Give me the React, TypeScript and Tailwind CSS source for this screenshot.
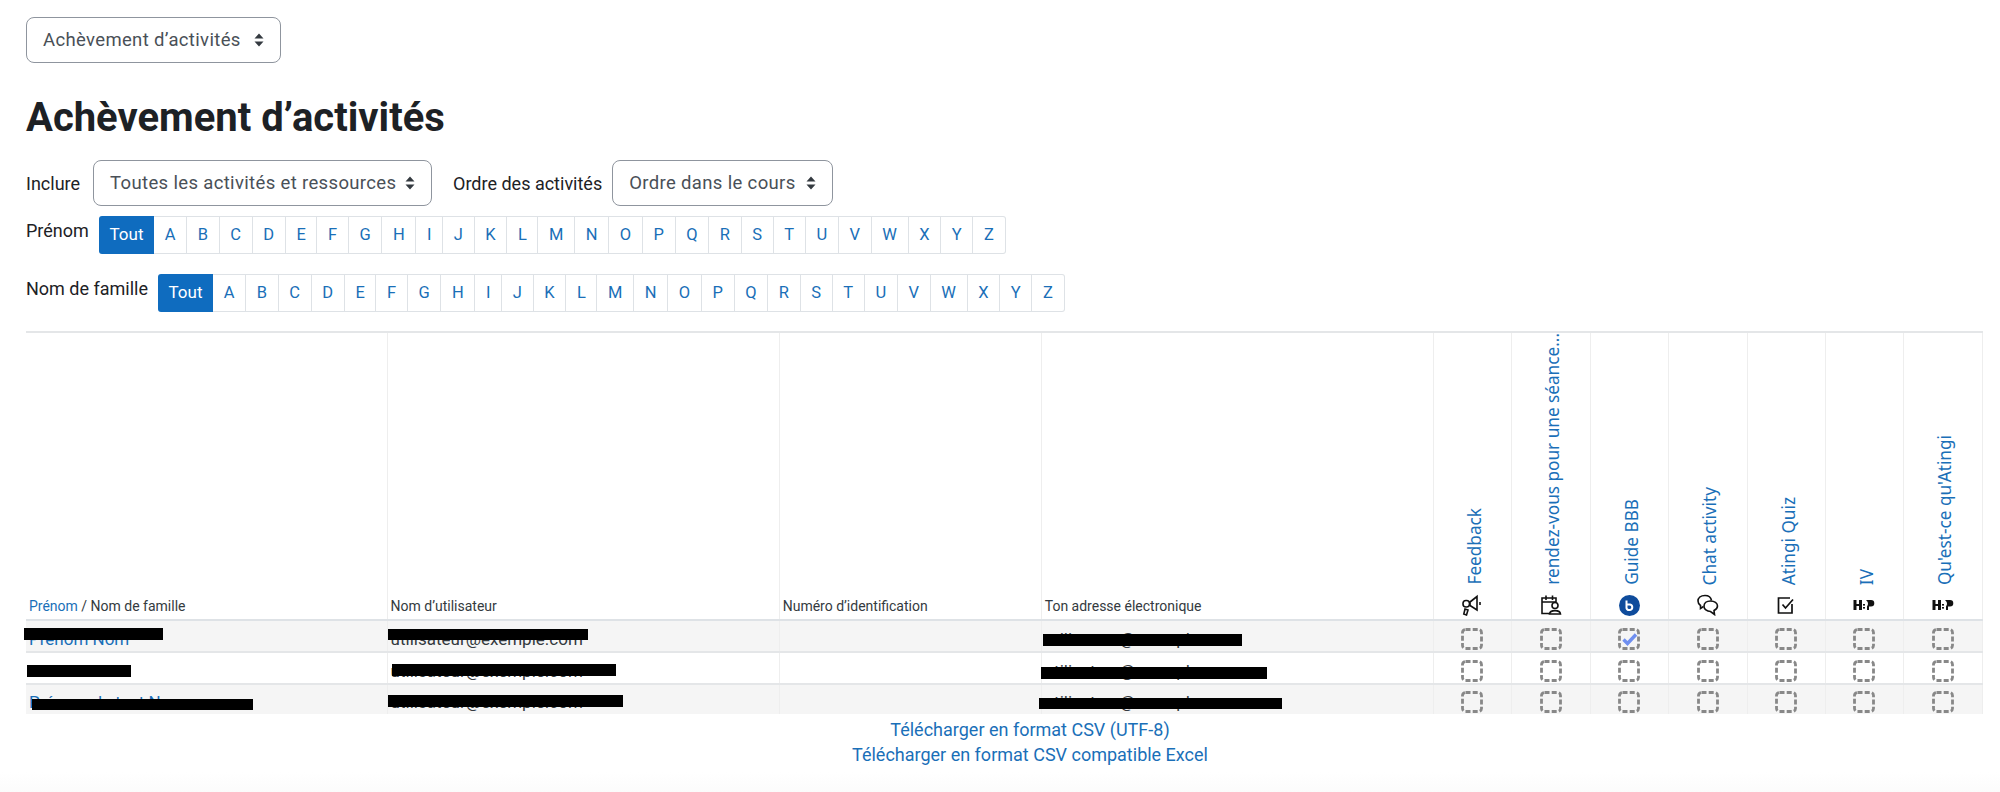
import type { ReactNode } from "react";

const letters = "ABCDEFGHIJKLMNOPQRSTUVWXYZ".split("");

const bodyFont = "font-['Roboto',_sans-serif]";

function Arrows() {
  return (
    <svg width="10" height="14" viewBox="0 0 10 14" className="shrink-0">
      <path d="M5 0.5 L9.5 5.5 H0.5 Z M5 13.5 L0.5 8.5 H9.5 Z" fill="#343a40" />
    </svg>
  );
}

function FakeSelect({ label, className }: { label: string; className: string }) {
  return (
    <div
      className={`flex h-[46px] items-center justify-between rounded-lg border border-[#8f959e] bg-white pl-[16px] pr-[16px] text-[18.5px] tracking-[0.35px] text-[#495057] ${className}`}
    >
      <span className="pt-px">{label}</span>
      <Arrows />
    </div>
  );
}

function InitialsBar({ label, labelClass }: { label: string; labelClass: string }) {
  return (
    <div className="flex items-start">
      <span className={`pt-[3px] text-[18px] leading-[24px] text-[#1d2125] ${labelClass}`}>{label}</span>
      <div className="flex h-[38px] text-[16.5px] text-[#1a6fb8]">
        <a className="flex w-[55px] items-center justify-center rounded-l-[3px] bg-[#0f6cbf] text-[17px] text-white">Tout</a>
        {letters.map((l, i) => (
          <a
            key={l}
            className={`flex items-center justify-center border-y border-r border-[#dee2e6] bg-white px-[10.65px] ${
              i === 25 ? "rounded-r-[3px]" : ""
            }`}
          >
            {l}
          </a>
        ))}
      </div>
    </div>
  );
}

function Megaphone() {
  return (
    <svg width="22" height="22" viewBox="0 0 22 22" fill="none" stroke="#111" strokeWidth="1.6">
      <path d="M9 8 L16 2.5 V16 L9 11.5 Z" />
      <rect x="2" y="6.5" width="6.5" height="6.5" rx="3" />
      <path d="M4 15 L7 16 L5.5 21 L2.8 20 Z" />
      <path d="M19 8 V11" />
    </svg>
  );
}

function CalendarUser() {
  return (
    <svg width="22" height="22" viewBox="0 0 22 22" fill="none" stroke="#111" strokeWidth="1.6">
      <path d="M9 19.5 H2 V4 H16 V8" />
      <path d="M2 8 H16 M6 1.5 V6 M12.5 1.5 V6" />
      <circle cx="15" cy="11.5" r="3" />
      <path d="M9.5 20 C10 15.5 20 15.5 20.5 20 Z" />
    </svg>
  );
}

function BbbLogo() {
  return (
    <svg width="21" height="21" viewBox="0 0 21 21">
      <circle cx="10.5" cy="10.5" r="10.5" fill="#0f4c9c" />
      <path d="M7.5 5.5 V13 A2.5 2.5 0 0 0 10 15 H11 A2.8 2.8 0 0 0 11 9.5 H8.5" fill="none" stroke="#fff" strokeWidth="2" />
    </svg>
  );
}

function Chats() {
  return (
    <svg width="22" height="22" viewBox="0 0 22 22" fill="none" stroke="#111" strokeWidth="1.6">
      <path d="M8 1.5 C3.5 1.5 1 4 1 7 C1 9 2 10.5 3.5 11.5 L3.5 14.5 L6.5 12.5" />
      <path d="M8 1.5 C11.5 1.5 14 3.5 14.5 6.5" />
      <path d="M13.5 7 C9.5 7 7 9.2 7 12.2 C7 15.2 9.8 17.5 13.5 17.5 L17.5 20.5 L17 16.5 C19 15.5 20.5 14 20.5 12 C20.5 9.2 17.5 7 13.5 7 Z" />
    </svg>
  );
}

function CheckIcon() {
  return (
    <svg width="20" height="20" viewBox="0 0 20 20" fill="none" stroke="#111" strokeWidth="1.7">
      <path d="M16 9 V18 H2.5 V3 H14" />
      <path d="M6.5 9.5 L9.5 13 L17 4.5" />
    </svg>
  );
}

// logo, not text
function H5pLogo() {
  return (
    <svg width="22" height="14" viewBox="0 0 22 14" fill="#111">
      <rect x="0.5" y="2" width="3" height="10" />
      <rect x="6" y="2" width="3" height="10" />
      <rect x="3" y="6" width="3.5" height="2" />
      <rect x="10" y="6" width="2" height="1.6" />
      <rect x="10" y="9" width="2" height="1.6" />
      <path d="M13 2 H18 A3.3 3.3 0 0 1 18 8.6 H16 V12 H14 V8.6 A5 5 0 0 0 13 2 Z" />
    </svg>
  );
}

function Box({ done }: { done?: boolean }) {
  return (
    <svg width="22" height="22" viewBox="0 0 22 22" fill="none" className="mx-auto block">
      <rect
        x="1.5"
        y="1.5"
        width="19"
        height="19"
        rx="3"
        stroke="#888888"
        strokeWidth="2.8"
        strokeDasharray="5 2.2"
      />
      {done && <path d="M5.5 11.5 L9.5 15.5 L18 6.5" stroke="#6f8ff0" strokeWidth="3.4" />}
    </svg>
  );
}

function Redacted({ className }: { className: string }) {
  return <span className={`absolute bg-black ${className}`} />;
}

const activities: { name: string; icon: ReactNode }[] = [
  { name: "Feedback", icon: <Megaphone /> },
  { name: "rendez-vous pour une séance...", icon: <CalendarUser /> },
  { name: "Guide BBB", icon: <BbbLogo /> },
  { name: "Chat activity", icon: <Chats /> },
  { name: "Atingi Quiz", icon: <CheckIcon /> },
  { name: "IV", icon: <H5pLogo /> },
  { name: "Qu'est-ce qu'Atingi", icon: <H5pLogo /> },
];

// placeholder names and addresses: the real ones are blacked out in the reference
const rows = [
  {
    name: "Prénom Nom",
    user: "utilisateur@exemple.com",
    email: "utilisateur@exemple.com",
    bars: ["-left-[2px] top-[7px] h-[12px] w-[139px]", "left-0 top-[8px] h-[11px] w-[200px]", "left-px top-[13px] h-[12px] w-[199px]"],
    done: 2,
    bg: "bg-[#f5f5f5]",
    h: "h-[32px]",
  },
  {
    name: "Prénom",
    user: "utilisateur@exemple.com",
    email: "utilisateur@exemple.com",
    bars: ["left-px top-[12px] h-[12px] w-[104px]", "left-[4px] top-[11px] h-[12px] w-[224px]", "-left-px top-[14px] h-[12px] w-[226px]"],
    done: -1,
    bg: "bg-white",
    h: "h-[32px]",
  },
  {
    name: "Prénom de test Nom",
    user: "utilisateur@exemple.com",
    email: "utilisateur@exemple.com",
    bars: ["left-[6px] top-[14px] h-[11px] w-[221px]", "left-0 top-[10px] h-[12px] w-[235px]", "-left-[3px] top-[13px] h-[11px] w-[243px]"],
    done: -1,
    bg: "bg-[#f5f5f5]",
    h: "h-[30px]",
  },
];

const headCell = "border-r border-[#eeeeee] px-[3px] pb-[2px] align-bottom text-left text-[14px] font-normal text-[#343a40]";

export default function App() {
  return (
    <div className={`min-h-[792px] bg-white ${bodyFont} text-[#1d2125]`}>
      <div className="px-[26px] pt-[17px]">
        <FakeSelect label="Achèvement d’activités" className="w-[255px]" />

        <h2 className="mt-[33px] text-[40px] font-bold leading-[44px] text-[#1d2125]">Achèvement d’activités</h2>

        <div className="mt-[20px] flex items-center text-[18px]">
          <span className="mr-[13px]">Inclure</span>
          <FakeSelect label="Toutes les activités et ressources" className="w-[339px]" />
          <span className="ml-[21px] mr-[10px]">Ordre des activités</span>
          <FakeSelect label="Ordre dans le cours" className="w-[221px]" />
        </div>

        <div className="mt-[10px]">
          <InitialsBar label="Prénom" labelClass="w-[73px]" />
        </div>
        <div className="mt-[20px]">
          <InitialsBar label="Nom de famille" labelClass="w-[132px]" />
        </div>

        <table className="mt-[19px] w-[1957px] table-fixed border-collapse border-t-2 border-[#e4e6e8] text-[17px] leading-[22px]">
          <colgroup>
            <col className="w-[361px]" />
            <col className="w-[392px]" />
            <col className="w-[262px]" />
            <col className="w-[392px]" />
            <col className="w-[78px]" />
            <col className="w-[79px]" />
            <col className="w-[78px]" />
            <col className="w-[79px]" />
            <col className="w-[78px]" />
            <col className="w-[78px]" />
            <col className="w-[79px]" />
          </colgroup>
          <thead>
            <tr className="h-[288px] border-b-2 border-[#dee2e6]">
              <th className={headCell}>
                <a className="text-[#1a6fb8]">Prénom</a> / Nom de famille
              </th>
              <th className={headCell}>Nom d’utilisateur</th>
              <th className={headCell}>Numéro d’identification</th>
              <th className={headCell}>Ton adresse électronique</th>
              {activities.map((a) => (
                <th key={a.name} className="border-r border-[#eeeeee] p-0 align-bottom font-normal">
                  <div className="flex flex-col items-center">
                    <a className="ml-[5px] whitespace-nowrap text-[17.2px] leading-[24px] text-[#1a6fb8] [font-family:'Noto_Sans',sans-serif] [writing-mode:vertical-rl] rotate-180">
                      {a.name}
                    </a>
                    <div className="mb-[2px] mt-[8px] flex h-[24px] items-center justify-center">{a.icon}</div>
                  </div>
                </th>
              ))}
            </tr>
          </thead>
          <tbody>
            {rows.map((r) => (
              <tr key={r.bars[0]} className={`${r.bg} ${r.h} border-b-2 border-[#e4e6e8] last:border-b-0`}>
                <td className="relative border-r border-[#eeeeee] px-[3px] pt-[5px] text-[#1a6fb8]">
                  {r.name}
                  <Redacted className={r.bars[0]} />
                </td>
                <td className="relative border-r border-[#eeeeee] px-[3px] pt-[5px] text-[#343a40]">
                  {r.user}
                  <Redacted className={r.bars[1]} />
                </td>
                <td className="border-r border-[#eeeeee]" />
                <td className="relative border-r border-[#eeeeee] px-[3px] pt-[5px] text-[#343a40]">
                  {r.email}
                  <Redacted className={r.bars[2]} />
                </td>
                {activities.map((a, i) => (
                  <td key={a.name} className="border-r border-[#eeeeee] p-0 pt-[5px]">
                    <Box done={i === r.done} />
                  </td>
                ))}
              </tr>
            ))}
          </tbody>
        </table>

        <div className="ml-[60px] mt-[3px] flex flex-col items-center text-[18px] leading-[25px] text-[#1a6fb8]">
          <a>Télécharger en format CSV (UTF-8)</a>
          <a>Télécharger en format CSV compatible Excel</a>
        </div>
      </div>
      <div className="mt-[5px] h-[27px] bg-gradient-to-b from-white to-[#fafafa]" />
    </div>
  );
}
